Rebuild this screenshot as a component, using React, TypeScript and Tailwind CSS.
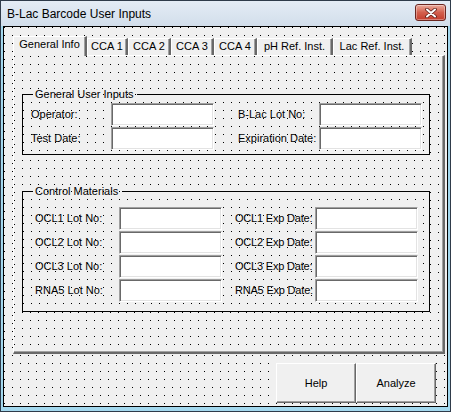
const dots =
  'bg-[linear-gradient(to_bottom,transparent_1px,#f0f0f0_1px),linear-gradient(to_right,#000_1px,transparent_1px)] [background-size:8px_8px]'

type Tab = { label: string; width: string; active?: boolean }

const tabs: Tab[] = [
  { label: 'General Info', width: 'w-[74px]', active: true },
  { label: 'CCA 1', width: 'w-[41px]' },
  { label: 'CCA 2', width: 'w-[43px]' },
  { label: 'CCA 3', width: 'w-[43px]' },
  { label: 'CCA 4', width: 'w-[43px]' },
  { label: 'pH Ref. Inst.', width: 'w-[76px]' },
  { label: 'Lac Ref. Inst.', width: 'w-[79px]' },
]

const userRows = [
  ['Operator:', 'B-Lac Lot No:'],
  ['Test Date:', 'Expiration Date:'],
]

const controlRows = [
  ['OCL1 Lot No:', 'OCL1 Exp Date:'],
  ['OCL2 Lot No:', 'OCL2 Exp Date:'],
  ['OCL3 Lot No:', 'OCL3 Exp Date:'],
  ['RNA5 Lot No:', 'RNA5 Exp Date:'],
]

const TextBox = () => (
  <input
    type="text"
    readOnly
    className="h-[23px] w-[103px] border border-t-[#a0a0a0] border-l-[#a0a0a0] border-r-white border-b-white bg-white p-0 shadow-[inset_1px_1px_0_#696969,inset_-1px_-1px_0_#e3e3e3] outline-none"
  />
)

const Frame = ({ title, className, children }: { title: string; className: string; children: React.ReactNode }) => (
  <div className={`w-[408px] border-x border-b border-black bg-[#f0f0f0] ${dots} ${className}`}>
    <div className="-mx-px flex h-px items-center">
      <div className="h-px w-[11px] bg-black" />
      <span className="whitespace-nowrap pl-[2px] pr-[4px] leading-[13px]">{title}</span>
      <div className="h-px flex-1 bg-black" />
    </div>
    {children}
  </div>
)

const WinButton = ({ label }: { label: string }) => (
  <button className="h-[40px] w-[80px] border border-t-white border-l-white border-r-[#696969] border-b-[#696969] bg-[#f0f0f0] text-[11px] text-black shadow-[inset_-1px_-1px_0_#a0a0a0]">
    {label}
  </button>
)

export default function App() {
  return (
    <div className="flex h-[412px] w-[451px] flex-col border border-[#2f3b4a] bg-[#a3d8ee] font-['Liberation_Sans',Arial,sans-serif] text-[11px] text-black">
      {/* title bar */}
      <div className="flex h-[25px] shrink-0 items-start justify-between bg-linear-to-b from-[#e4ecf5] to-[#d2deeb]">
        <span className="pl-[6px] pt-[6px] text-[12px] leading-[15px]">B-Lac Barcode User Inputs</span>
        <div className="mr-[4px] mt-[3px] flex h-[17px] w-[31px] items-center justify-center rounded-[3px] border border-[#6b2620] bg-linear-to-b from-[#eaaa9d] via-[#d35f4d] to-[#c43c2c] shadow-[inset_0_0_0_1px_rgba(255,255,255,0.35)]">
          <svg width="12" height="10" viewBox="0 0 12 10">
            <path d="M2 1.5 L10 8.5 M10 1.5 L2 8.5" stroke="#5a1d17" strokeWidth="3.6" strokeLinecap="round" />
            <path d="M2 1.5 L10 8.5 M10 1.5 L2 8.5" stroke="#fff" strokeWidth="2" strokeLinecap="round" />
          </svg>
        </div>
      </div>

      {/* client area */}
      <div className={`mx-[2px] mb-[4px] flex flex-1 flex-col border border-black bg-[#f0f0f0] pl-[9px] pt-[9px] ${dots}`}>
        <div className="flex h-[19px] items-end">
          {tabs.map((t) =>
            t.active ? (
              <div
                key={t.label}
                className={`${t.width} relative z-10 -mb-px h-[20px] whitespace-nowrap border-t border-l border-r-2 border-t-white border-l-white border-r-[#696969] bg-[#f0f0f0] text-center leading-[14px] shadow-[inset_-1px_0_0_#a0a0a0]`}
              >
                {t.label}
              </div>
            ) : (
              <div
                key={t.label}
                className={`${t.width} h-[17px] whitespace-nowrap border-t border-l border-r-2 border-t-white border-l-white border-r-[#696969] bg-[#f0f0f0] text-center leading-[14px] shadow-[inset_-1px_0_0_#a0a0a0]`}
              >
                {t.label}
              </div>
            ),
          )}
        </div>

        <div
          className={`h-[299px] w-[432px] border-t border-l border-r-2 border-b-2 border-t-white border-l-white border-r-[#696969] border-b-[#696969] bg-[#f0f0f0] pl-[8px] pt-[38px] shadow-[inset_-1px_-1px_0_#a0a0a0] ${dots}`}
        >
          <Frame title="General User Inputs" className="h-[61px]">
            <div className="grid grid-cols-[80px_103px_105px_103px] gap-y-px pl-[8px] pt-[8px]">
              {userRows.map(([a, b]) => (
                <div key={a} className="contents">
                  <span className="self-center whitespace-nowrap">{a}</span>
                  <TextBox />
                  <span className="self-center whitespace-nowrap pl-[24px]">{b}</span>
                  <TextBox />
                </div>
              ))}
            </div>
          </Frame>

          <Frame title="Control Materials" className="mt-[36px] h-[121px]">
            <div className="grid grid-cols-[84px_103px_93px_103px] gap-y-px pl-[12px] pt-[15px]">
              {controlRows.map(([a, b]) => (
                <div key={a} className="contents">
                  <span className="self-center whitespace-nowrap">{a}</span>
                  <TextBox />
                  <span className="self-center whitespace-nowrap pl-[13px] tracking-[-0.2px]">{b}</span>
                  <TextBox />
                </div>
              ))}
            </div>
          </Frame>
        </div>

        <div className="mt-[9px] flex justify-end pr-[11px]">
          <WinButton label="Help" />
          <WinButton label="Analyze" />
        </div>
      </div>
    </div>
  )
}
